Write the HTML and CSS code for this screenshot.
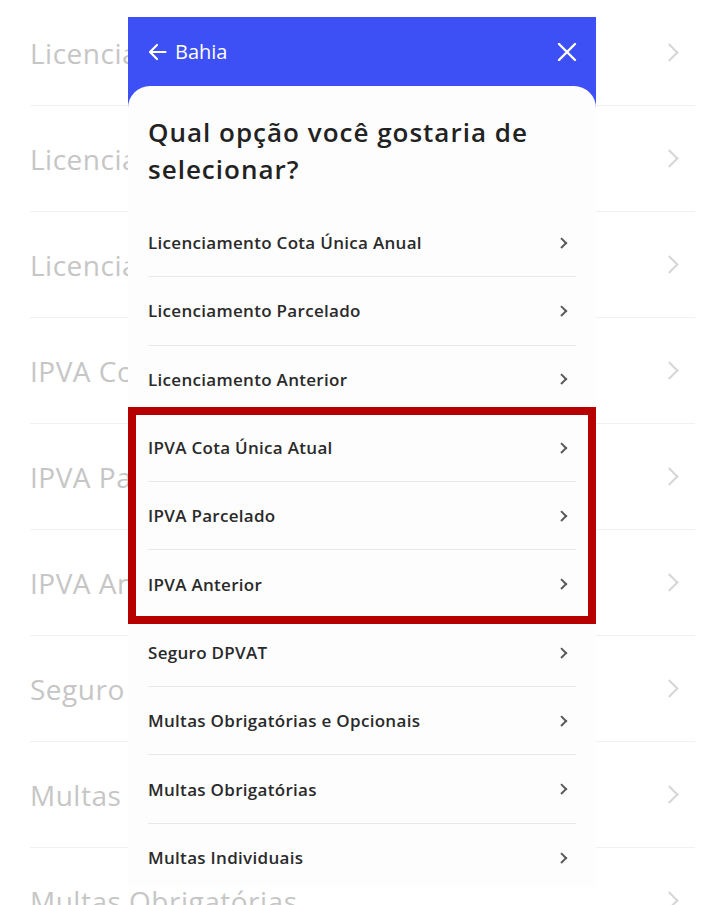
FILE: index.html
```html
<!DOCTYPE html>
<html>
<head>
    <meta charset="UTF-8">
    <title>Bahia</title>
    <link rel="stylesheet" href="styles.css">
</head>
<body>
    <div class="page">
        <div class="bg-row"><span>Licenciamento Cota Única Anual</span><span class="bg-chev"></span></div>
        <div class="bg-row"><span>Licenciamento Parcelado</span><span class="bg-chev"></span></div>
        <div class="bg-row"><span>Licenciamento Anterior</span><span class="bg-chev"></span></div>
        <div class="bg-row"><span>IPVA Cota Única Atual</span><span class="bg-chev"></span></div>
        <div class="bg-row"><span>IPVA Parcelado</span><span class="bg-chev"></span></div>
        <div class="bg-row"><span>IPVA Anterior</span><span class="bg-chev"></span></div>
        <div class="bg-row"><span>Seguro DPVAT</span><span class="bg-chev"></span></div>
        <div class="bg-row"><span>Multas Obrigatórias e Opcionais</span><span class="bg-chev"></span></div>
        <div class="bg-row"><span>Multas Obrigatórias</span><span class="bg-chev"></span></div>
    </div>

    <div class="modal">
        <div class="modal-header">
            <div class="back">
                <svg width="19" height="18" viewBox="0 0 19 18" fill="none" stroke="#fff" stroke-width="2.2" stroke-linecap="round" stroke-linejoin="round">
                    <path d="M17.5 9H2M9 2L2 9l7 7"/>
                </svg>
                <span>Bahia</span>
            </div>
            <svg class="close" width="20" height="20" viewBox="0 0 20 20" stroke="#fff" stroke-width="2.4" stroke-linecap="round">
                <path d="M2 2l16 16M18 2L2 18"/>
            </svg>
        </div>

        <div class="card">
            <h1>Qual opção você gostaria de selecionar?</h1>
            <div class="option"><span>Licenciamento Cota Única Anual</span><span class="chev"></span></div>
            <div class="option"><span>Licenciamento Parcelado</span><span class="chev"></span></div>
            <div class="option"><span>Licenciamento Anterior</span><span class="chev"></span></div>
            <div class="option"><span>IPVA Cota Única Atual</span><span class="chev"></span></div>
            <div class="option"><span>IPVA Parcelado</span><span class="chev"></span></div>
            <div class="option"><span>IPVA Anterior</span><span class="chev"></span></div>
            <div class="option"><span>Seguro DPVAT</span><span class="chev"></span></div>
            <div class="option"><span>Multas Obrigatórias e Opcionais</span><span class="chev"></span></div>
            <div class="option"><span>Multas Obrigatórias</span><span class="chev"></span></div>
            <div class="option"><span>Multas Individuais</span><span class="chev"></span></div>
        </div>

        <!-- destaque vermelho nas opções de IPVA -->
        <div class="highlight"></div>
    </div>
</body>
</html>
```

FILE: styles.css
```css
* {
    margin: 0;
    padding: 0;
    box-sizing: border-box;
}

body {
    background: #fff;
    font-family: 'Open Sans', 'Noto Sans', sans-serif;
    width: 724px;
    height: 905px;
    overflow: hidden;
    position: relative;
}

/* lista ao fundo */
.page {
    padding: 0 29px 0 30px;
}

.bg-row {
    height: 106px;
    border-bottom: 1px solid #f1f1f1;
    display: flex;
    align-items: center;
    justify-content: space-between;
    font-size: 28px;
    letter-spacing: 0.5px;
    color: #c6c6c6;
    white-space: nowrap;
}

.bg-chev {
    width: 13px;
    height: 13px;
    border-top: 2.5px solid #d6d6d6;
    border-right: 2.5px solid #d6d6d6;
    transform: rotate(45deg);
    margin-right: 19px;
}

/* modal */
.modal {
    position: absolute;
    left: 128px;
    top: 17px;
    width: 468px;
    height: 870px;
    background: #3c50f6;
    overflow: hidden;
}

.modal-header {
    height: 69px;
    display: flex;
    align-items: center;
    justify-content: space-between;
    padding: 0 19px 0 20px;
    color: #fff;
}

.back {
    display: flex;
    align-items: center;
    gap: 8px;
    font-size: 20px;
    font-weight: 500;
}

.card {
    background: #fdfdfd;
    border-radius: 22px 22px 0 0;
    height: 801px;
    padding: 28px 20px 0 20px;
}

h1 {
    font-size: 26px;
    line-height: 37px;
    font-weight: 600;
    letter-spacing: 1px;
    color: #222;
    margin-bottom: 21px;
    padding-right: 20px;
}

.option {
    height: 68.3px;
    border-bottom: 1px solid #e9e9e9;
    display: flex;
    align-items: center;
    justify-content: space-between;
    font-size: 17px;
    font-weight: 600;
    letter-spacing: 0.3px;
    color: #2a2a2a;
}

.chev {
    width: 7.5px;
    height: 7.5px;
    border-top: 2px solid #5a5a5a;
    border-right: 2px solid #5a5a5a;
    transform: rotate(45deg);
    margin-right: 11px;
}

.highlight {
    position: absolute;
    left: 0;
    top: 390px;
    width: 468px;
    height: 217px;
    border: 8px solid #b70000;
}
```
